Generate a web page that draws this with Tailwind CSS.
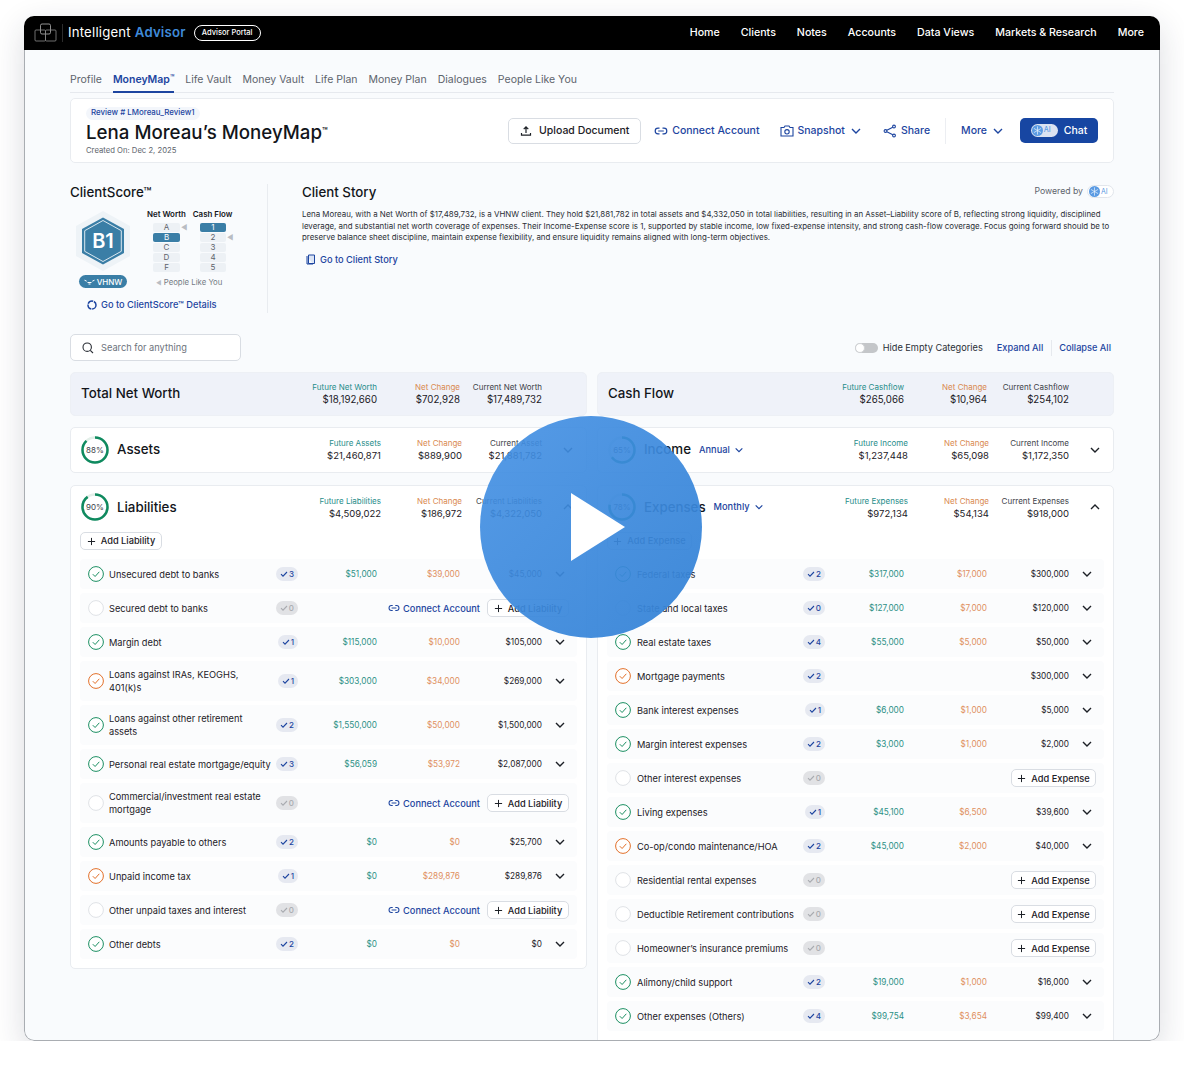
<!doctype html>
<html lang="en">
<head>
<meta charset="UTF-8">
<meta name="viewport" content="width=device-width, initial-scale=1.0">
<title>Lena Moreau's MoneyMap</title>
<script src="https://cdn.jsdelivr.net/npm/@tailwindcss/browser@4"></script>
</head>
<body class="bg-white font-[Inter,sans-serif] text-[#1c2026]">
<svg class="hidden">
  <symbol id="chev" viewBox="0 0 12 12"><path d="M2 4l4 4 4-4" fill="none" stroke="currentColor" stroke-width="1.4"/></symbol>
  <symbol id="up" viewBox="0 0 12 12"><path d="M2 4l4 4 4-4" fill="none" stroke="currentColor" stroke-width="1.4" transform="rotate(180 6 6)"/></symbol>
  <symbol id="ok" viewBox="0 0 16 16"><circle cx="8" cy="8" r="7.4" fill="#fff" stroke="currentColor" stroke-width="1"/><path d="M4.800 8.200l2.300 2.300L11.300 5.800" fill="none" stroke="currentColor" stroke-width="1"/></symbol>
  <symbol id="none" viewBox="0 0 16 16"><circle cx="8" cy="8" r="7.4" fill="#fff" stroke="#dfe2e6" stroke-width="1"/></symbol>
  <symbol id="tick" viewBox="0 0 8 8"><path d="M1 4.200l2 2L7 2" fill="none" stroke="currentColor" stroke-width="1.100"/></symbol>
  <symbol id="link" viewBox="0 0 14 14"><path d="M5.500 4.200H4a2.800 2.800 0 0 0 0 5.600h1.500M8.500 4.200H10a2.800 2.800 0 0 1 0 5.600H8.500M4.200 7h5.600" fill="none" stroke="currentColor" stroke-width="1.200"/></symbol>
  <symbol id="plus" viewBox="0 0 10 10"><path d="M5 1v8M1 5h8" fill="none" stroke="currentColor" stroke-width="1.100"/></symbol>
  <symbol id="flake" viewBox="0 0 12 12"><circle cx="6" cy="6" r="6" fill="#5b9be3"/><path d="M6 1.500v9M2.100 3.750l7.800 4.500M2.100 8.250l7.800-4.500" stroke="#e6f0fb" stroke-width="0.800"/></symbol>
</svg>

<div class="relative mt-4 ml-6 w-[1136px] h-[1025px] rounded-[10px] overflow-hidden shadow-[0_10px_32px_rgba(30,40,60,0.16)]">
  <header class="h-[34px] bg-black text-white flex items-center pl-[10px] pr-4">
    <svg class="w-[23px] h-[20px]" viewBox="0 0 23 20" fill="none" stroke="#8a8a8a" stroke-width="0.800"><rect x="6.500" y="1" width="10" height="10" rx="1.500" stroke="#b5b5b5"/><rect x="1" y="7" width="10.500" height="11" rx="1"/><rect x="11.500" y="7" width="10.500" height="11" rx="1"/></svg>
    <span class="ml-[5px] w-px h-[18px] bg-[#2c2c2c]"></span>
    <span class="ml-[5px] text-[13.200px] tracking-[0.2px]">Intelligent <span class="font-semibold text-[#3f8ad8]">Advisor</span></span>
    <span class="ml-2 h-4 w-[67px] flex items-center justify-center rounded-full border border-white text-[7.500px] font-medium">Advisor Portal</span>
    <nav class="ml-auto flex gap-[21px] pb-px text-[10.650px] font-medium">
      <span>Home</span><span>Clients</span><span>Notes</span><span>Accounts</span><span>Data Views</span><span>Markets &amp; Research</span><span>More</span>
    </nav>
  </header>

  <main class="h-[991px] overflow-hidden bg-[#f9fbfd] border-x border-b border-[#a9adb2] rounded-b-[10px] px-[45px] pt-[18px]">
    <div class="flex gap-[11px] h-[25px] border-b border-[#e6e9ee] text-[10.500px] text-[#5d636c]">
      <span class="pt-[4px]">Profile</span>
      <span class="pt-[4px] h-[25px] border-b-2 border-[#1d45a0] text-[#1d45a0] font-semibold">MoneyMap<sup class="text-[7px]">™</sup></span>
      <span class="pt-[4px]">Life Vault</span><span class="pt-[4px]">Money Vault</span><span class="pt-[4px]">Life Plan</span><span class="pt-[4px]">Money Plan</span><span class="pt-[4px]">Dialogues</span><span class="pt-[4px]">People Like You</span>
    </div>

    <section class="mt-[5px] h-[65px] bg-white border border-[#e9ecf0] rounded-[5px] pl-[15px] pr-[15px] flex items-center">
      <div class="flex flex-col items-start pt-[2px]">
        <span class="h-[13px] px-[5px] flex items-center rounded-full bg-[#f3f6fb] text-[7.900px] font-medium text-[#1d45a0]">Review # LMoreau_Review1</span>
        <h1 class="mt-[2px] text-[18.700px] leading-[22px] font-medium text-[#12151a] whitespace-nowrap">Lena Moreau’s MoneyMap<sup class="text-[9px] font-semibold">™</sup></h1>
        <span class="mt-[1px] text-[7.700px] text-[#5d636c]">Created On: Dec 2, 2025</span>
      </div>
      <div class="ml-auto flex items-center text-[10.500px] font-medium text-[#1d45a0]">
        <button class="h-[26px] w-[133px] flex items-center justify-center gap-[7px] bg-white border border-[#d9dde3] rounded-[5px] text-[#1c2026]">
          <svg class="w-3 h-3" viewBox="0 0 12 12" fill="none" stroke="currentColor" stroke-width="1.200"><path d="M6 8V2M3.700 4.200L6 1.800l2.300 2.400M1.500 8v2.200h9V8"/></svg>Upload Document
        </button>
        <span class="ml-[13px] flex items-center gap-1"><svg class="w-[14px] h-[14px]"><use href="#link"/></svg>Connect Account</span>
        <span class="ml-5 flex items-center gap-1"><svg class="w-[14px] h-[14px]" viewBox="0 0 14 14" fill="none" stroke="currentColor" stroke-width="1.100"><path d="M1 3.500h3l1-1.500h4l1 1.500h3v8.500H1z"/><circle cx="7" cy="7.800" r="2.200"/></svg>Snapshot<svg class="ml-[1px] w-3 h-3"><use href="#chev"/></svg></span>
        <span class="ml-[21px] flex items-center gap-1"><svg class="w-[14px] h-[14px]" viewBox="0 0 14 14" fill="none" stroke="currentColor" stroke-width="1.100"><circle cx="2.500" cy="7" r="1.400"/><circle cx="11" cy="2.500" r="1.400"/><circle cx="11" cy="11.500" r="1.400"/><path d="M3.800 6.300l6-3.100M3.800 7.700l6 3.100"/></svg>Share</span>
        <span class="ml-[15px] w-px h-[26px] bg-[#eceef2]"></span>
        <span class="ml-[15px] flex items-center gap-[5px]">More<svg class="w-3 h-3"><use href="#chev"/></svg></span>
        <button class="ml-4 h-[25px] w-[78px] flex items-center justify-center gap-[6px] rounded-[5px] bg-[#1746a2] text-white">
          <span class="h-[13px] w-[27px] rounded-full bg-white/85 flex items-center pl-px gap-px text-[7px] text-[#5b9be3]"><svg class="w-[11px] h-[11px]"><use href="#flake"/></svg>AI</span>Chat
        </button>
      </div>
    </section>

    <section class="mt-[21px] h-[129px] flex">
      <div class="w-[198px] shrink-0 border-r border-[#e9ecf0]">
        <h2 class="text-[13.300px] leading-4 font-medium text-[#12151a]">ClientScore™</h2>
        <div class="mt-[10px] flex">
          <div class="ml-[4px] w-[58px] flex flex-col items-center">
            <svg class="w-[58px] h-[62px]" viewBox="0 0 58 62">
              <polygon points="29,1 56,16 56,46 29,61 2,46 2,16" fill="#eef3f7"/>
              <polygon points="29,7.500 50,19 50,43 29,54.500 8,43 8,19" fill="#3a7ea6"/>
              <polygon points="29,10.500 47.300,20.700 47.300,41.300 29,51.500 10.700,41.300 10.700,20.700" fill="#3a7ea6" stroke="#dbe8f0" stroke-width="1"/>
              <text x="29" y="38" text-anchor="middle" font-size="20" font-weight="600" fill="#fff" font-family="Inter">B1</text>
            </svg>
            <span class="mt-[3px] h-[13px] w-12 flex items-center justify-center gap-[2px] rounded-full bg-[#3a7ea6] text-white text-[8px] font-medium">
              <svg class="w-[11px] h-[6px]" viewBox="0 0 11 6" fill="none" stroke="#fff" stroke-width="1"><path d="M0.500 1.200l2.200 1M10.500 1.200l-2.200 1M3.500 3.500h4M4.500 5h2"/></svg>VHNW
            </span>
          </div>
          <div class="ml-[15px] w-[90px]">
            <div class="flex gap-[7px] text-[7.900px] leading-[9px] font-semibold text-[#12151a] whitespace-nowrap"><span>Net Worth</span><span>Cash Flow</span></div>
            <div class="mt-[4px] flex text-[8px] text-center text-[#5d636c]">
              <div class="ml-[6px] w-[27px] flex flex-col gap-px">
                <span class="h-[9px] leading-[9px] rounded-[2px] bg-[#edf1f5]">A</span>
                <span class="h-[9px] leading-[9px] rounded-[2px] bg-[#3a7ea6] text-white">B</span>
                <span class="h-[9px] leading-[9px] rounded-[2px] bg-[#edf1f5]">C</span>
                <span class="h-[9px] leading-[9px] rounded-[2px] bg-[#edf1f5]">D</span>
                <span class="h-[9px] leading-[9px] rounded-[2px] bg-[#edf1f5]">F</span>
              </div>
              <span class="w-[20px] pl-px text-left text-[7px] leading-[9px] text-[#b9bdc3]">◀</span>
              <div class="w-[26px] flex flex-col gap-px">
                <span class="h-[9px] leading-[9px] rounded-[2px] bg-[#3a7ea6] text-white">1</span>
                <span class="h-[9px] leading-[9px] rounded-[2px] bg-[#edf1f5]">2</span>
                <span class="h-[9px] leading-[9px] rounded-[2px] bg-[#edf1f5]">3</span>
                <span class="h-[9px] leading-[9px] rounded-[2px] bg-[#edf1f5]">4</span>
                <span class="h-[9px] leading-[9px] rounded-[2px] bg-[#edf1f5]">5</span>
              </div>
              <span class="ml-[1px] mt-[10px] text-[7px] leading-[9px] text-[#b9bdc3]">◀</span>
            </div>
            <div class="mt-[5px] ml-[9px] text-[7.800px] text-[#767c85] whitespace-nowrap"><span class="text-[6px] text-[#b9bdc3]">◀</span> People Like You</div>
          </div>
        </div>
        <div class="mt-[9px] ml-[17px] flex items-center gap-[4px] text-[9.250px] font-medium text-[#1d45a0] whitespace-nowrap">
          <svg class="w-[10px] h-[10px]" viewBox="0 0 10 10" fill="none" stroke="currentColor" stroke-width="1.500"><circle cx="5" cy="5" r="4" stroke-dasharray="6 0.800"/></svg><span>Go to ClientScore™ Details</span>
        </div>
      </div>
      <div class="ml-[34px] w-[812px]">
        <div class="flex items-center justify-between">
          <h2 class="text-[13.300px] leading-4 font-medium text-[#12151a]">Client Story</h2>
          <span class="flex items-center gap-[4px] text-[8.700px] text-[#5d636c]">Powered by <span class="h-[13px] w-[27px] rounded-full bg-white border border-[#e2e6ec] flex items-center pl-px gap-px text-[7px] text-[#5b9be3]"><svg class="w-[11px] h-[11px]"><use href="#flake"/></svg>AI</span></span>
        </div>
        <p class="mt-[9px] text-[7.900px] leading-[11.500px] text-[#2a2e35] whitespace-nowrap">Lena Moreau, with a Net Worth of $17,489,732, is a VHNW client. They hold $21,881,782 in total assets and $4,332,050 in total liabilities, resulting in an Asset–Liability score of B, reflecting strong liquidity, disciplined<br>leverage, and substantial net worth coverage of expenses. Their Income-Expense score is 1, supported by stable income, low fixed-expense intensity, and strong cash-flow coverage. Focus going forward should be to<br>preserve balance sheet discipline, maintain expense flexibility, and ensure liquidity remains aligned with long-term objectives.</p>
        <div class="mt-[9px] ml-[4px] flex items-center gap-[4px] text-[9.250px] font-medium text-[#1d45a0]">
          <svg class="w-[10px] h-[11px]" viewBox="0 0 10 11" fill="#dbe4f5" stroke="currentColor" stroke-width="1"><path d="M2.500 1h6v8.500h-6zM1 2v8h6"/></svg>Go to Client Story
        </div>
      </div>
    </section>

    <section class="mt-[21px] h-[27px] flex items-center">
      <div class="w-[171px] h-[27px] bg-white border border-[#d9dde3] rounded-[5px] flex items-center pl-[11px] gap-[7px] text-[9.250px] text-[#6d737c]">
        <svg class="w-3 h-3 text-[#2a2e35]" viewBox="0 0 12 12" fill="none" stroke="currentColor" stroke-width="1.100"><circle cx="5.200" cy="5.200" r="4.200"/><path d="M8.300 8.300L11 11"/></svg><span class="pt-px">Search for anything</span>
      </div>
      <div class="ml-auto pr-[3px] pt-px flex items-center text-[9.200px]">
        <span class="relative w-[23px] h-[10px] rounded-full bg-[#c4c6c9]"><span class="absolute left-0 top-0 w-[10px] h-[10px] rounded-full bg-white border border-[#d0d2d5]"></span></span>
        <span class="ml-[5px] text-[#2a2e35]">Hide Empty Categories</span>
        <span class="ml-[14px] font-medium text-[#1d45a0]">Expand All</span>
        <span class="ml-2 w-px h-4 bg-[#e6e9ee]"></span>
        <span class="ml-[7px] font-medium text-[#1d45a0]">Collapse All</span>
      </div>
    </section>

    <div class="mt-[11px] grid grid-cols-[517px_517px] gap-x-[10px]">
      <!-- left column -->
      <div class="flex flex-col">
        <div class="h-[44px] rounded-[5px] bg-[#eff2f9] border border-[#edf0f5] flex items-center pl-[10px] pr-[44px]">
          <h3 class="flex-1 text-[13.300px] font-medium text-[#12151a]">Total Net Worth</h3>
          <div class="text-right"><div class="text-[8px] leading-[11px] text-[#1f8d8a]">Future Net Worth</div><div class="text-[9.700px] leading-[13px]">$18,192,660</div></div>
          <div class="w-[83px] text-right"><div class="text-[8px] leading-[11px] text-[#d9894f]">Net Change</div><div class="text-[9.700px] leading-[13px]">$702,928</div></div>
          <div class="w-[82px] text-right"><div class="text-[8px] leading-[11px] text-[#3c4148]">Current Net Worth</div><div class="text-[9.700px] leading-[13px]">$17,489,732</div></div>
        </div>

        <div class="mt-[11px] h-[46px] rounded-[5px] bg-white border border-[#e9ecf0] flex items-center pl-[10px] pr-3 pb-px">
          <svg class="w-7 h-7" viewBox="0 0 28 28"><circle cx="14" cy="14" r="12.500" fill="none" stroke="#e3efe9" stroke-width="2.500"/><circle cx="14" cy="14" r="12.500" fill="none" stroke="#0f8a5f" stroke-width="2.500" pathLength="100" stroke-dasharray="88 100" transform="rotate(-90 14 14)"/><text x="14" y="17" text-anchor="middle" font-size="8" fill="#3c4148" font-family="Inter">88%</text></svg>
          <h3 class="ml-2 flex-1 text-[13.300px] font-medium text-[#12151a]">Assets</h3>
          <div class="text-right"><div class="text-[8px] leading-[11px] text-[#1f8d8a]">Future Assets</div><div class="text-[9.500px] leading-[13px]">$21,460,871</div></div>
          <div class="w-[81px] text-right"><div class="text-[8px] leading-[11px] text-[#d9894f]">Net Change</div><div class="text-[9.500px] leading-[13px]">$889,900</div></div>
          <div class="w-[80px] text-right"><div class="text-[8px] leading-[11px] text-[#3c4148]">Current Asset</div><div class="text-[9.500px] leading-[13px]">$21,881,782</div></div>
          <svg class="ml-5 w-3 h-3"><use href="#chev"/></svg>
        </div>

        <div class="mt-3 h-[484px] rounded-[5px] bg-white border border-[#e9ecf0] px-[9px] pt-[7px]">
          <div class="flex items-center h-7 pl-px pr-[3px]">
            <svg class="w-7 h-7" viewBox="0 0 28 28"><circle cx="14" cy="14" r="12.500" fill="none" stroke="#e3efe9" stroke-width="2.500"/><circle cx="14" cy="14" r="12.500" fill="none" stroke="#0f8a5f" stroke-width="2.500" pathLength="100" stroke-dasharray="90 100" transform="rotate(-90 14 14)"/><text x="14" y="17" text-anchor="middle" font-size="8" fill="#3c4148" font-family="Inter">90%</text></svg>
            <h3 class="ml-2 pt-px flex-1 text-[13.300px] font-medium text-[#12151a]">Liabilities</h3>
            <div class="mt-[2px] text-right"><div class="text-[8px] leading-[11px] text-[#1f8d8a]">Future Liabilities</div><div class="text-[9.500px] leading-[13px]">$4,509,022</div></div>
            <div class="mt-[2px] w-[81px] text-right"><div class="text-[8px] leading-[11px] text-[#d9894f]">Net Change</div><div class="text-[9.500px] leading-[13px]">$186,972</div></div>
            <div class="mt-[2px] w-[80px] text-right"><div class="text-[8px] leading-[11px] text-[#3c4148]">Current Liabilities</div><div class="text-[9.500px] leading-[13px]">$4,322,050</div></div>
            <svg class="ml-5 w-3 h-3"><use href="#up"/></svg>
          </div>
          <button class="mt-[11px] h-[18px] w-[82px] flex items-center justify-center gap-[5px] bg-white border border-[#d9dde3] rounded-[5px] text-[9.250px] font-medium"><svg class="w-[9px] h-[9px]"><use href="#plus"/></svg>Add Liability</button>
          <div class="mt-[9px] flex flex-col gap-1">
            <div class="flex items-center h-[30px] pl-2 rounded-[4px] bg-[#fbfcfd] text-[9.250px] leading-[13px]">
              <svg class="w-4 h-4 text-[#1b8f62]"><use href="#ok"/></svg><span class="ml-[5px] w-[165px] whitespace-nowrap">Unsecured debt to banks</span><span class="w-[24px] flex justify-end"><span class="h-[14px] px-1 flex items-center gap-px rounded-full bg-[#e6e9f1] text-[8px] font-medium text-[#1d45a0]"><svg class="w-2 h-2"><use href="#tick"/></svg>3</span></span><span class="w-[79px] text-right text-[8.250px] text-[#2b9085]">$51,000</span><span class="w-[83px] text-right text-[8.250px] text-[#e0905f]">$39,000</span><span class="w-[82px] text-right text-[8.250px]">$45,000</span><svg class="ml-3 w-3 h-3"><use href="#chev"/></svg>
            </div>
            <div class="flex items-center h-[30px] pl-2 pr-2 rounded-[4px] bg-[#fbfcfd] text-[9.250px] leading-[13px]">
              <svg class="w-4 h-4"><use href="#none"/></svg><span class="ml-[5px] w-[165px] whitespace-nowrap">Secured debt to banks</span><span class="w-[24px] flex justify-end"><span class="h-[14px] px-1 flex items-center gap-px rounded-full bg-[#e1e2e5] text-[8px] font-medium text-[#a8abb0]"><svg class="w-2 h-2"><use href="#tick"/></svg>0</span></span><span class="ml-auto flex items-center gap-[3px] font-medium text-[#1d45a0]"><svg class="w-3 h-3"><use href="#link"/></svg>Connect Account</span><button class="ml-[7px] h-[18px] w-[82px] flex items-center justify-center gap-[5px] bg-white border border-[#d9dde3] rounded-[5px] font-medium"><svg class="w-[9px] h-[9px]"><use href="#plus"/></svg>Add Liability</button>
            </div>
            <div class="flex items-center h-[30px] pl-2 rounded-[4px] bg-[#fbfcfd] text-[9.250px] leading-[13px]">
              <svg class="w-4 h-4 text-[#1b8f62]"><use href="#ok"/></svg><span class="ml-[5px] w-[165px] whitespace-nowrap">Margin debt</span><span class="w-[24px] flex justify-end"><span class="h-[14px] px-1 flex items-center gap-px rounded-full bg-[#e6e9f1] text-[8px] font-medium text-[#1d45a0]"><svg class="w-2 h-2"><use href="#tick"/></svg>1</span></span><span class="w-[79px] text-right text-[8.250px] text-[#2b9085]">$115,000</span><span class="w-[83px] text-right text-[8.250px] text-[#e0905f]">$10,000</span><span class="w-[82px] text-right text-[8.250px]">$105,000</span><svg class="ml-3 w-3 h-3"><use href="#chev"/></svg>
            </div>
            <div class="flex items-center h-[40px] pl-2 rounded-[4px] bg-[#fbfcfd] text-[9.250px] leading-[13px]">
              <svg class="w-4 h-4 text-[#e2702a]"><use href="#ok"/></svg><span class="ml-[5px] w-[165px] whitespace-nowrap">Loans against IRAs, KEOGHS,<br>401(k)s</span><span class="w-[24px] flex justify-end"><span class="h-[14px] px-1 flex items-center gap-px rounded-full bg-[#e6e9f1] text-[8px] font-medium text-[#1d45a0]"><svg class="w-2 h-2"><use href="#tick"/></svg>1</span></span><span class="w-[79px] text-right text-[8.250px] text-[#2b9085]">$303,000</span><span class="w-[83px] text-right text-[8.250px] text-[#e0905f]">$34,000</span><span class="w-[82px] text-right text-[8.250px]">$269,000</span><svg class="ml-3 w-3 h-3"><use href="#chev"/></svg>
            </div>
            <div class="flex items-center h-[40px] pl-2 rounded-[4px] bg-[#fbfcfd] text-[9.250px] leading-[13px]">
              <svg class="w-4 h-4 text-[#1b8f62]"><use href="#ok"/></svg><span class="ml-[5px] w-[165px] whitespace-nowrap">Loans against other retirement<br>assets</span><span class="w-[24px] flex justify-end"><span class="h-[14px] px-1 flex items-center gap-px rounded-full bg-[#e6e9f1] text-[8px] font-medium text-[#1d45a0]"><svg class="w-2 h-2"><use href="#tick"/></svg>2</span></span><span class="w-[79px] text-right text-[8.250px] text-[#2b9085]">$1,550,000</span><span class="w-[83px] text-right text-[8.250px] text-[#e0905f]">$50,000</span><span class="w-[82px] text-right text-[8.250px]">$1,500,000</span><svg class="ml-3 w-3 h-3"><use href="#chev"/></svg>
            </div>
            <div class="flex items-center h-[30px] pl-2 rounded-[4px] bg-[#fbfcfd] text-[9.250px] leading-[13px]">
              <svg class="w-4 h-4 text-[#1b8f62]"><use href="#ok"/></svg><span class="ml-[5px] w-[165px] whitespace-nowrap">Personal real estate mortgage/equity</span><span class="w-[24px] flex justify-end"><span class="h-[14px] px-1 flex items-center gap-px rounded-full bg-[#e6e9f1] text-[8px] font-medium text-[#1d45a0]"><svg class="w-2 h-2"><use href="#tick"/></svg>3</span></span><span class="w-[79px] text-right text-[8.250px] text-[#2b9085]">$56,059</span><span class="w-[83px] text-right text-[8.250px] text-[#e0905f]">$53,972</span><span class="w-[82px] text-right text-[8.250px]">$2,087,000</span><svg class="ml-3 w-3 h-3"><use href="#chev"/></svg>
            </div>
            <div class="flex items-center h-[40px] pl-2 pr-2 rounded-[4px] bg-[#fbfcfd] text-[9.250px] leading-[13px]">
              <svg class="w-4 h-4"><use href="#none"/></svg><span class="ml-[5px] w-[165px] whitespace-nowrap">Commercial/investment real estate<br>mortgage</span><span class="w-[24px] flex justify-end"><span class="h-[14px] px-1 flex items-center gap-px rounded-full bg-[#e1e2e5] text-[8px] font-medium text-[#a8abb0]"><svg class="w-2 h-2"><use href="#tick"/></svg>0</span></span><span class="ml-auto flex items-center gap-[3px] font-medium text-[#1d45a0]"><svg class="w-3 h-3"><use href="#link"/></svg>Connect Account</span><button class="ml-[7px] h-[18px] w-[82px] flex items-center justify-center gap-[5px] bg-white border border-[#d9dde3] rounded-[5px] font-medium"><svg class="w-[9px] h-[9px]"><use href="#plus"/></svg>Add Liability</button>
            </div>
            <div class="flex items-center h-[30px] pl-2 rounded-[4px] bg-[#fbfcfd] text-[9.250px] leading-[13px]">
              <svg class="w-4 h-4 text-[#1b8f62]"><use href="#ok"/></svg><span class="ml-[5px] w-[165px] whitespace-nowrap">Amounts payable to others</span><span class="w-[24px] flex justify-end"><span class="h-[14px] px-1 flex items-center gap-px rounded-full bg-[#e6e9f1] text-[8px] font-medium text-[#1d45a0]"><svg class="w-2 h-2"><use href="#tick"/></svg>2</span></span><span class="w-[79px] text-right text-[8.250px] text-[#2b9085]">$0</span><span class="w-[83px] text-right text-[8.250px] text-[#e0905f]">$0</span><span class="w-[82px] text-right text-[8.250px]">$25,700</span><svg class="ml-3 w-3 h-3"><use href="#chev"/></svg>
            </div>
            <div class="flex items-center h-[30px] pl-2 rounded-[4px] bg-[#fbfcfd] text-[9.250px] leading-[13px]">
              <svg class="w-4 h-4 text-[#e2702a]"><use href="#ok"/></svg><span class="ml-[5px] w-[165px] whitespace-nowrap">Unpaid income tax</span><span class="w-[24px] flex justify-end"><span class="h-[14px] px-1 flex items-center gap-px rounded-full bg-[#e6e9f1] text-[8px] font-medium text-[#1d45a0]"><svg class="w-2 h-2"><use href="#tick"/></svg>1</span></span><span class="w-[79px] text-right text-[8.250px] text-[#2b9085]">$0</span><span class="w-[83px] text-right text-[8.250px] text-[#e0905f]">$289,876</span><span class="w-[82px] text-right text-[8.250px]">$289,876</span><svg class="ml-3 w-3 h-3"><use href="#chev"/></svg>
            </div>
            <div class="flex items-center h-[30px] pl-2 pr-2 rounded-[4px] bg-[#fbfcfd] text-[9.250px] leading-[13px]">
              <svg class="w-4 h-4"><use href="#none"/></svg><span class="ml-[5px] w-[165px] whitespace-nowrap">Other unpaid taxes and interest</span><span class="w-[24px] flex justify-end"><span class="h-[14px] px-1 flex items-center gap-px rounded-full bg-[#e1e2e5] text-[8px] font-medium text-[#a8abb0]"><svg class="w-2 h-2"><use href="#tick"/></svg>0</span></span><span class="ml-auto flex items-center gap-[3px] font-medium text-[#1d45a0]"><svg class="w-3 h-3"><use href="#link"/></svg>Connect Account</span><button class="ml-[7px] h-[18px] w-[82px] flex items-center justify-center gap-[5px] bg-white border border-[#d9dde3] rounded-[5px] font-medium"><svg class="w-[9px] h-[9px]"><use href="#plus"/></svg>Add Liability</button>
            </div>
            <div class="flex items-center h-[30px] pl-2 rounded-[4px] bg-[#fbfcfd] text-[9.250px] leading-[13px]">
              <svg class="w-4 h-4 text-[#1b8f62]"><use href="#ok"/></svg><span class="ml-[5px] w-[165px] whitespace-nowrap">Other debts</span><span class="w-[24px] flex justify-end"><span class="h-[14px] px-1 flex items-center gap-px rounded-full bg-[#e6e9f1] text-[8px] font-medium text-[#1d45a0]"><svg class="w-2 h-2"><use href="#tick"/></svg>2</span></span><span class="w-[79px] text-right text-[8.250px] text-[#2b9085]">$0</span><span class="w-[83px] text-right text-[8.250px] text-[#e0905f]">$0</span><span class="w-[82px] text-right text-[8.250px]">$0</span><svg class="ml-3 w-3 h-3"><use href="#chev"/></svg>
            </div>
          </div>
        </div>
      </div>

      <!-- right column -->
      <div class="flex flex-col">
        <div class="h-[44px] rounded-[5px] bg-[#eff2f9] border border-[#edf0f5] flex items-center pl-[10px] pr-[44px]">
          <h3 class="flex-1 text-[13.300px] font-medium text-[#12151a]">Cash Flow</h3>
          <div class="text-right"><div class="text-[8px] leading-[11px] text-[#1f8d8a]">Future Cashflow</div><div class="text-[9.700px] leading-[13px]">$265,066</div></div>
          <div class="w-[83px] text-right"><div class="text-[8px] leading-[11px] text-[#d9894f]">Net Change</div><div class="text-[9.700px] leading-[13px]">$10,964</div></div>
          <div class="w-[82px] text-right"><div class="text-[8px] leading-[11px] text-[#3c4148]">Current Cashflow</div><div class="text-[9.700px] leading-[13px]">$254,102</div></div>
        </div>

        <div class="mt-[11px] h-[46px] rounded-[5px] bg-white border border-[#e9ecf0] flex items-center pl-[10px] pr-3 pb-px">
          <svg class="w-7 h-7" viewBox="0 0 28 28"><circle cx="14" cy="14" r="12.500" fill="none" stroke="#e3efe9" stroke-width="2.500"/><circle cx="14" cy="14" r="12.500" fill="none" stroke="#0f8a5f" stroke-width="2.500" pathLength="100" stroke-dasharray="65 100" transform="rotate(-90 14 14)"/><text x="14" y="17" text-anchor="middle" font-size="8" fill="#3c4148" font-family="Inter">65%</text></svg>
          <h3 class="ml-2 text-[13.300px] font-medium text-[#12151a]">Income</h3>
          <span class="ml-2 flex-1 flex items-center gap-1 text-[9.250px] font-medium text-[#1d45a0]">Annual<svg class="w-[10px] h-[10px]"><use href="#chev"/></svg></span>
          <div class="text-right"><div class="text-[8px] leading-[11px] text-[#1f8d8a]">Future Income</div><div class="text-[9.500px] leading-[13px]">$1,237,448</div></div>
          <div class="w-[81px] text-right"><div class="text-[8px] leading-[11px] text-[#d9894f]">Net Change</div><div class="text-[9.500px] leading-[13px]">$65,098</div></div>
          <div class="w-[80px] text-right"><div class="text-[8px] leading-[11px] text-[#3c4148]">Current Income</div><div class="text-[9.500px] leading-[13px]">$1,172,350</div></div>
          <svg class="ml-5 w-3 h-3"><use href="#chev"/></svg>
        </div>

        <div class="mt-3 h-[640px] rounded-[5px] bg-white border border-[#e9ecf0] px-[9px] pt-[7px]">
          <div class="flex items-center h-7 pl-px pr-[3px]">
            <svg class="w-7 h-7" viewBox="0 0 28 28"><circle cx="14" cy="14" r="12.500" fill="none" stroke="#e3efe9" stroke-width="2.500"/><circle cx="14" cy="14" r="12.500" fill="none" stroke="#0f8a5f" stroke-width="2.500" pathLength="100" stroke-dasharray="78 100" transform="rotate(-90 14 14)"/><text x="14" y="17" text-anchor="middle" font-size="8" fill="#3c4148" font-family="Inter">78%</text></svg>
            <h3 class="ml-2 pt-px text-[13.300px] font-medium text-[#12151a]">Expenses</h3>
            <span class="ml-2 flex-1 flex items-center gap-1 text-[9.250px] font-medium text-[#1d45a0]">Monthly<svg class="w-[10px] h-[10px]"><use href="#chev"/></svg></span>
            <div class="mt-[2px] text-right"><div class="text-[8px] leading-[11px] text-[#1f8d8a]">Future Expenses</div><div class="text-[9.500px] leading-[13px]">$972,134</div></div>
            <div class="mt-[2px] w-[81px] text-right"><div class="text-[8px] leading-[11px] text-[#d9894f]">Net Change</div><div class="text-[9.500px] leading-[13px]">$54,134</div></div>
            <div class="mt-[2px] w-[80px] text-right"><div class="text-[8px] leading-[11px] text-[#3c4148]">Current Expenses</div><div class="text-[9.500px] leading-[13px]">$918,000</div></div>
            <svg class="ml-5 w-3 h-3"><use href="#up"/></svg>
          </div>
          <button class="mt-[11px] h-[18px] w-[85px] flex items-center justify-center gap-[5px] bg-white border border-[#d9dde3] rounded-[5px] text-[9.250px] font-medium"><svg class="w-[9px] h-[9px]"><use href="#plus"/></svg>Add Expense</button>
          <div class="mt-[9px] flex flex-col gap-1">
            <div class="flex items-center h-[30px] pl-2 rounded-[4px] bg-[#fbfcfd] text-[9.250px] leading-[13px]">
              <svg class="w-4 h-4 text-[#1b8f62]"><use href="#ok"/></svg><span class="ml-[6px] w-[164px] whitespace-nowrap">Federal taxes</span><span class="w-[24px] flex justify-end"><span class="h-[14px] px-1 flex items-center gap-px rounded-full bg-[#e6e9f1] text-[8px] font-medium text-[#1d45a0]"><svg class="w-2 h-2"><use href="#tick"/></svg>2</span></span><span class="w-[79px] text-right text-[8.250px] text-[#2b9085]">$317,000</span><span class="w-[83px] text-right text-[8.250px] text-[#e0905f]">$17,000</span><span class="w-[82px] text-right text-[8.250px]">$300,000</span><svg class="ml-3 w-3 h-3"><use href="#chev"/></svg>
            </div>
            <div class="flex items-center h-[30px] pl-2 rounded-[4px] bg-[#fbfcfd] text-[9.250px] leading-[13px]">
              <svg class="w-4 h-4"><use href="#none"/></svg><span class="ml-[6px] w-[164px] whitespace-nowrap">State and local taxes</span><span class="w-[24px] flex justify-end"><span class="h-[14px] px-1 flex items-center gap-px rounded-full bg-[#e6e9f1] text-[8px] font-medium text-[#1d45a0]"><svg class="w-2 h-2"><use href="#tick"/></svg>0</span></span><span class="w-[79px] text-right text-[8.250px] text-[#2b9085]">$127,000</span><span class="w-[83px] text-right text-[8.250px] text-[#e0905f]">$7,000</span><span class="w-[82px] text-right text-[8.250px]">$120,000</span><svg class="ml-3 w-3 h-3"><use href="#chev"/></svg>
            </div>
            <div class="flex items-center h-[30px] pl-2 rounded-[4px] bg-[#fbfcfd] text-[9.250px] leading-[13px]">
              <svg class="w-4 h-4 text-[#1b8f62]"><use href="#ok"/></svg><span class="ml-[6px] w-[164px] whitespace-nowrap">Real estate taxes</span><span class="w-[24px] flex justify-end"><span class="h-[14px] px-1 flex items-center gap-px rounded-full bg-[#e6e9f1] text-[8px] font-medium text-[#1d45a0]"><svg class="w-2 h-2"><use href="#tick"/></svg>4</span></span><span class="w-[79px] text-right text-[8.250px] text-[#2b9085]">$55,000</span><span class="w-[83px] text-right text-[8.250px] text-[#e0905f]">$5,000</span><span class="w-[82px] text-right text-[8.250px]">$50,000</span><svg class="ml-3 w-3 h-3"><use href="#chev"/></svg>
            </div>
            <div class="flex items-center h-[30px] pl-2 rounded-[4px] bg-[#fbfcfd] text-[9.250px] leading-[13px]">
              <svg class="w-4 h-4 text-[#e2702a]"><use href="#ok"/></svg><span class="ml-[6px] w-[164px] whitespace-nowrap">Mortgage payments</span><span class="w-[24px] flex justify-end"><span class="h-[14px] px-1 flex items-center gap-px rounded-full bg-[#e6e9f1] text-[8px] font-medium text-[#1d45a0]"><svg class="w-2 h-2"><use href="#tick"/></svg>2</span></span><span class="w-[79px]"></span><span class="w-[83px]"></span><span class="w-[82px] text-right text-[8.250px]">$300,000</span><svg class="ml-3 w-3 h-3"><use href="#chev"/></svg>
            </div>
            <div class="flex items-center h-[30px] pl-2 rounded-[4px] bg-[#fbfcfd] text-[9.250px] leading-[13px]">
              <svg class="w-4 h-4 text-[#1b8f62]"><use href="#ok"/></svg><span class="ml-[6px] w-[164px] whitespace-nowrap">Bank interest expenses</span><span class="w-[24px] flex justify-end"><span class="h-[14px] px-1 flex items-center gap-px rounded-full bg-[#e6e9f1] text-[8px] font-medium text-[#1d45a0]"><svg class="w-2 h-2"><use href="#tick"/></svg>1</span></span><span class="w-[79px] text-right text-[8.250px] text-[#2b9085]">$6,000</span><span class="w-[83px] text-right text-[8.250px] text-[#e0905f]">$1,000</span><span class="w-[82px] text-right text-[8.250px]">$5,000</span><svg class="ml-3 w-3 h-3"><use href="#chev"/></svg>
            </div>
            <div class="flex items-center h-[30px] pl-2 rounded-[4px] bg-[#fbfcfd] text-[9.250px] leading-[13px]">
              <svg class="w-4 h-4 text-[#1b8f62]"><use href="#ok"/></svg><span class="ml-[6px] w-[164px] whitespace-nowrap">Margin interest expenses</span><span class="w-[24px] flex justify-end"><span class="h-[14px] px-1 flex items-center gap-px rounded-full bg-[#e6e9f1] text-[8px] font-medium text-[#1d45a0]"><svg class="w-2 h-2"><use href="#tick"/></svg>2</span></span><span class="w-[79px] text-right text-[8.250px] text-[#2b9085]">$3,000</span><span class="w-[83px] text-right text-[8.250px] text-[#e0905f]">$1,000</span><span class="w-[82px] text-right text-[8.250px]">$2,000</span><svg class="ml-3 w-3 h-3"><use href="#chev"/></svg>
            </div>
            <div class="flex items-center h-[30px] pl-2 pr-2 rounded-[4px] bg-[#fbfcfd] text-[9.250px] leading-[13px]">
              <svg class="w-4 h-4"><use href="#none"/></svg><span class="ml-[6px] w-[164px] whitespace-nowrap">Other interest expenses</span><span class="w-[24px] flex justify-end"><span class="h-[14px] px-1 flex items-center gap-px rounded-full bg-[#e1e2e5] text-[8px] font-medium text-[#a8abb0]"><svg class="w-2 h-2"><use href="#tick"/></svg>0</span></span><button class="ml-auto h-[18px] w-[85px] flex items-center justify-center gap-[5px] bg-white border border-[#d9dde3] rounded-[5px] font-medium"><svg class="w-[9px] h-[9px]"><use href="#plus"/></svg>Add Expense</button>
            </div>
            <div class="flex items-center h-[30px] pl-2 rounded-[4px] bg-[#fbfcfd] text-[9.250px] leading-[13px]">
              <svg class="w-4 h-4 text-[#1b8f62]"><use href="#ok"/></svg><span class="ml-[6px] w-[164px] whitespace-nowrap">Living expenses</span><span class="w-[24px] flex justify-end"><span class="h-[14px] px-1 flex items-center gap-px rounded-full bg-[#e6e9f1] text-[8px] font-medium text-[#1d45a0]"><svg class="w-2 h-2"><use href="#tick"/></svg>1</span></span><span class="w-[79px] text-right text-[8.250px] text-[#2b9085]">$45,100</span><span class="w-[83px] text-right text-[8.250px] text-[#e0905f]">$6,500</span><span class="w-[82px] text-right text-[8.250px]">$39,600</span><svg class="ml-3 w-3 h-3"><use href="#chev"/></svg>
            </div>
            <div class="flex items-center h-[30px] pl-2 rounded-[4px] bg-[#fbfcfd] text-[9.250px] leading-[13px]">
              <svg class="w-4 h-4 text-[#e2702a]"><use href="#ok"/></svg><span class="ml-[6px] w-[164px] whitespace-nowrap">Co-op/condo maintenance/HOA</span><span class="w-[24px] flex justify-end"><span class="h-[14px] px-1 flex items-center gap-px rounded-full bg-[#e6e9f1] text-[8px] font-medium text-[#1d45a0]"><svg class="w-2 h-2"><use href="#tick"/></svg>2</span></span><span class="w-[79px] text-right text-[8.250px] text-[#2b9085]">$45,000</span><span class="w-[83px] text-right text-[8.250px] text-[#e0905f]">$2,000</span><span class="w-[82px] text-right text-[8.250px]">$40,000</span><svg class="ml-3 w-3 h-3"><use href="#chev"/></svg>
            </div>
            <div class="flex items-center h-[30px] pl-2 pr-2 rounded-[4px] bg-[#fbfcfd] text-[9.250px] leading-[13px]">
              <svg class="w-4 h-4"><use href="#none"/></svg><span class="ml-[6px] w-[164px] whitespace-nowrap">Residential rental expenses</span><span class="w-[24px] flex justify-end"><span class="h-[14px] px-1 flex items-center gap-px rounded-full bg-[#e1e2e5] text-[8px] font-medium text-[#a8abb0]"><svg class="w-2 h-2"><use href="#tick"/></svg>0</span></span><button class="ml-auto h-[18px] w-[85px] flex items-center justify-center gap-[5px] bg-white border border-[#d9dde3] rounded-[5px] font-medium"><svg class="w-[9px] h-[9px]"><use href="#plus"/></svg>Add Expense</button>
            </div>
            <div class="flex items-center h-[30px] pl-2 pr-2 rounded-[4px] bg-[#fbfcfd] text-[9.250px] leading-[13px]">
              <svg class="w-4 h-4"><use href="#none"/></svg><span class="ml-[6px] w-[164px] whitespace-nowrap">Deductible Retirement contributions</span><span class="w-[24px] flex justify-end"><span class="h-[14px] px-1 flex items-center gap-px rounded-full bg-[#e1e2e5] text-[8px] font-medium text-[#a8abb0]"><svg class="w-2 h-2"><use href="#tick"/></svg>0</span></span><button class="ml-auto h-[18px] w-[85px] flex items-center justify-center gap-[5px] bg-white border border-[#d9dde3] rounded-[5px] font-medium"><svg class="w-[9px] h-[9px]"><use href="#plus"/></svg>Add Expense</button>
            </div>
            <div class="flex items-center h-[30px] pl-2 pr-2 rounded-[4px] bg-[#fbfcfd] text-[9.250px] leading-[13px]">
              <svg class="w-4 h-4"><use href="#none"/></svg><span class="ml-[6px] w-[164px] whitespace-nowrap">Homeowner’s insurance premiums</span><span class="w-[24px] flex justify-end"><span class="h-[14px] px-1 flex items-center gap-px rounded-full bg-[#e1e2e5] text-[8px] font-medium text-[#a8abb0]"><svg class="w-2 h-2"><use href="#tick"/></svg>0</span></span><button class="ml-auto h-[18px] w-[85px] flex items-center justify-center gap-[5px] bg-white border border-[#d9dde3] rounded-[5px] font-medium"><svg class="w-[9px] h-[9px]"><use href="#plus"/></svg>Add Expense</button>
            </div>
            <div class="flex items-center h-[30px] pl-2 rounded-[4px] bg-[#fbfcfd] text-[9.250px] leading-[13px]">
              <svg class="w-4 h-4 text-[#1b8f62]"><use href="#ok"/></svg><span class="ml-[6px] w-[164px] whitespace-nowrap">Alimony/child support</span><span class="w-[24px] flex justify-end"><span class="h-[14px] px-1 flex items-center gap-px rounded-full bg-[#e6e9f1] text-[8px] font-medium text-[#1d45a0]"><svg class="w-2 h-2"><use href="#tick"/></svg>2</span></span><span class="w-[79px] text-right text-[8.250px] text-[#2b9085]">$19,000</span><span class="w-[83px] text-right text-[8.250px] text-[#e0905f]">$1,000</span><span class="w-[82px] text-right text-[8.250px]">$16,000</span><svg class="ml-3 w-3 h-3"><use href="#chev"/></svg>
            </div>
            <div class="flex items-center h-[30px] pl-2 rounded-[4px] bg-[#fbfcfd] text-[9.250px] leading-[13px]">
              <svg class="w-4 h-4 text-[#1b8f62]"><use href="#ok"/></svg><span class="ml-[6px] w-[164px] whitespace-nowrap">Other expenses (Others)</span><span class="w-[24px] flex justify-end"><span class="h-[14px] px-1 flex items-center gap-px rounded-full bg-[#e6e9f1] text-[8px] font-medium text-[#1d45a0]"><svg class="w-2 h-2"><use href="#tick"/></svg>4</span></span><span class="w-[79px] text-right text-[8.250px] text-[#2b9085]">$99,754</span><span class="w-[83px] text-right text-[8.250px] text-[#e0905f]">$3,654</span><span class="w-[82px] text-right text-[8.250px]">$99,400</span><svg class="ml-3 w-3 h-3"><use href="#chev"/></svg>
            </div>
          </div>
        </div>
      </div>
    </div>
  </main>

  <!-- video play overlay -->
  <div class="absolute left-[456px] top-[400px] w-[222px] h-[222px] rounded-full bg-gradient-to-br from-[#4390e4]/90 to-[#3583d6]/95 flex items-center justify-center">
    <svg class="ml-[14px] w-[54px] h-[68px]" viewBox="0 0 54 68"><polygon points="0,0 54,34 0,68" fill="#fff"/></svg>
  </div>
</div>
</body>
</html>
